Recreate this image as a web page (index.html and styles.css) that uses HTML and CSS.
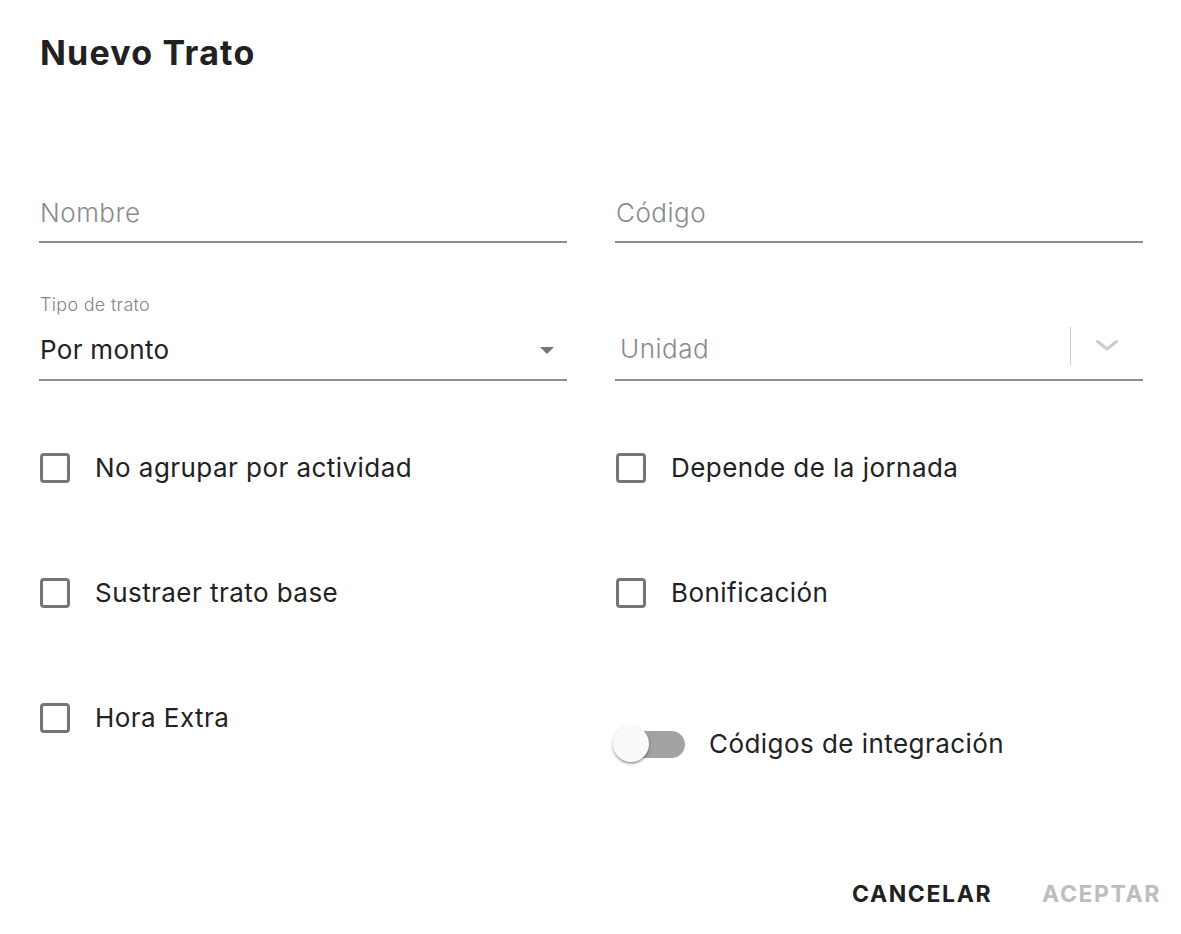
FILE: index.html
```html
<!DOCTYPE html>
<html lang="es">
<head>
<meta charset="utf-8">
<title>Nuevo Trato</title>
<link rel="stylesheet" href="styles.css">
</head>
<body>
<div class="dialog">
  <h1 class="title">Nuevo Trato</h1>
  <div class="form">
    <div class="field">
      <div class="input placeholder">Nombre</div>
    </div>
    <div class="field">
      <div class="input placeholder">Código</div>
    </div>

    <div class="field select">
      <div class="label">Tipo de trato</div>
      <div class="select-row">
        <div class="input value">Por monto</div>
        <svg class="caret" width="14" height="7" viewBox="0 0 14 7"><path d="M0 0h14L7 7z" fill="#757575"/></svg>
      </div>
    </div>
    <div class="field rselect">
      <div class="input placeholder unidad">Unidad</div>
      <span class="sep"></span>
      <span class="indicator">
        <svg width="24" height="12" viewBox="0 0 24 12"><path d="M2.5 2.5 L12 10 L21.5 2.5" fill="none" stroke="#cccccc" stroke-width="3" stroke-linecap="round" stroke-linejoin="round"/></svg>
      </span>
    </div>

    <div class="check"><span class="box"></span><span class="check-label">No agrupar por actividad</span></div>
    <div class="check"><span class="box"></span><span class="check-label">Depende de la jornada</span></div>

    <div class="check"><span class="box"></span><span class="check-label">Sustraer trato base</span></div>
    <div class="check"><span class="box"></span><span class="check-label">Bonificación</span></div>

    <div class="check"><span class="box"></span><span class="check-label">Hora Extra</span></div>
    <div class="switch-row">
      <span class="switch"><span class="track"></span><span class="knob"></span></span>
      <span class="check-label">Códigos de integración</span>
    </div>
  </div>
  <div class="actions">
    <span class="btn primary">Cancelar</span>
    <span class="btn disabled">Aceptar</span>
  </div>
</div>
</body>
</html>
```

FILE: styles.css
```css
* { box-sizing: border-box; }
html, body { margin: 0; padding: 0; background: #ffffff; }
body {
  font-family: "Inter", "Noto Sans", "Liberation Sans", sans-serif;
  color: #222222;
}
.dialog {
  width: 1181px;
  height: 934px;
  padding: 33px 38px 0 39px;
}
.title {
  margin: 0 0 0 1px;
  font-size: 34px;
  line-height: 40px;
  font-weight: 700;
  color: #212121;
  letter-spacing: 1.2px;
}
.form {
  margin-top: 124px;
  display: grid;
  grid-template-columns: 1fr 1fr;
  column-gap: 48px;
  row-gap: 50px;
}
.field {
  border-bottom: 2px solid #8f8f8f;
  padding-bottom: 12px;
}
.input {
  font-size: 26px;
  line-height: 32px;
  font-weight: 400;
  padding-left: 1px;
  letter-spacing: 0.5px;
}
.placeholder {
  color: #8a8a8a;
  font-weight: 300;
}
.value { color: #212121; letter-spacing: 0.3px; }
.label {
  font-size: 18px;
  line-height: 24px;
  color: #858585;
  font-weight: 300;
  padding-left: 1px;
  letter-spacing: 0.3px;
}
.select-row {
  margin-top: 17px;
  display: flex;
  align-items: center;
  justify-content: space-between;
  padding-right: 13px;
}
.select { padding-bottom: 13px; }
.rselect {
  align-self: end;
  display: flex;
  align-items: center;
  padding-bottom: 13px;
}
.unidad {
  flex: 1;
  padding-left: 5px;
  line-height: 36px;
  position: relative;
  top: 1px;
}
.sep {
  width: 1px;
  height: 38px;
  background: #cccccc;
  margin-top: -4px;
}
.indicator {
  display: flex;
  align-items: center;
  justify-content: center;
  width: 72px;
  height: 36px;
  margin-top: -6px;
}
.check {
  display: flex;
  align-items: center;
  height: 40px;
  margin-top: 17px;
}
.form > .check:nth-child(n+7) { margin-top: 35px; }
.box {
  width: 30px;
  height: 30px;
  border: 3px solid #757575;
  border-radius: 4px;
  flex: none;
}
.check .box { margin-left: 1px; }
.check-label {
  margin-left: 25px;
  font-size: 26px;
  line-height: 40px;
  color: #222222;
  letter-spacing: 0.45px;
}
.switch-row {
  display: flex;
  align-items: center;
  height: 40px;
  margin-top: 61px;
}
.switch {
  position: relative;
  width: 70px;
  height: 40px;
  flex: none;
  margin-left: -2px;
}
.track {
  position: absolute;
  left: 4px;
  top: 7px;
  width: 68px;
  height: 27px;
  border-radius: 14px;
  background: #a3a3a3;
}
.knob {
  position: absolute;
  left: 0;
  top: 2px;
  width: 36px;
  height: 36px;
  border-radius: 50%;
  background: #fafafa;
  box-shadow: 0 2px 2px rgba(0,0,0,0.24), 0 1px 4px rgba(0,0,0,0.14), 0 2px 1px -1px rgba(0,0,0,0.12);
}
.switch-row .check-label { margin-left: 26px; }
.actions {
  margin-top: 110px;
  display: flex;
  justify-content: flex-end;
  gap: 50px;
  margin-right: -18px;
}
.btn {
  font-size: 23px;
  line-height: 40px;
  font-weight: 700;
  text-transform: uppercase;
  letter-spacing: 1.6px;
}
.primary { color: #212121; }
.disabled { color: #bdbdbd; }
```
